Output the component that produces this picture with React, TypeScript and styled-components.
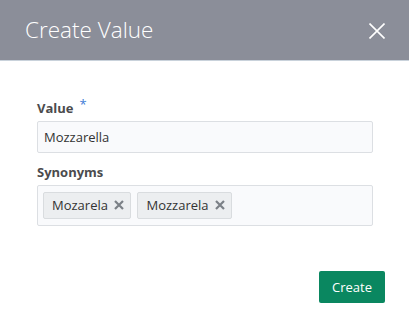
import React from "react";
import styled, { createGlobalStyle } from "styled-components";

const Global = createGlobalStyle`
  html, body { margin: 0; padding: 0; background: #ffffff; }
  body { font-family: "Open Sans", "Noto Sans", sans-serif; }
  * { box-sizing: border-box; }
`;

const Dialog = styled.div`
  width: 409px;
  height: 328px;
  background: #ffffff;
  display: flex;
  flex-direction: column;
`;

const Header = styled.div`
  height: 61px;
  background: #8b8e99;
  border-bottom: 1px solid #c9d2db;
  display: flex;
  align-items: center;
  justify-content: space-between;
  padding: 0 24px 0 25px;
`;

const Title = styled.h1`
  margin: 0;
  font-size: 22.5px;
  font-weight: 300;
  color: #ffffff;
  line-height: 30px;
`;

const CloseButton = styled.button`
  width: 16px;
  height: 16px;
  padding: 0;
  border: 0;
  background: transparent;
  display: flex;
  cursor: pointer;
  margin-top: 1px;
`;

const Body = styled.div`
  padding: 38px 36px 0 37px;
  display: flex;
  flex-direction: column;
`;

const Label = styled.label`
  display: block;
  font-size: 13px;
  font-weight: 700;
  color: #4b4b4d;
  line-height: 18px;
  margin-bottom: 3.5px;
`;

const Required = styled.span`
  color: #3d7dd6;
  font-weight: 400;
  margin-left: 6px;
  position: relative;
  top: -4px;
`;

const Field = styled.div<{ $gap?: number }>`
  margin-top: ${(p) => p.$gap ?? 0}px;
`;

const Input = styled.input`
  width: 100%;
  height: 32px;
  border: 1px solid #dcdfe3;
  border-radius: 2px;
  background: #f9fafc;
  padding: 0 7px 0 6px;
  font-family: "Open Sans", "Noto Sans", sans-serif;
  font-size: 13px;
  color: #333333;
  outline: none;
`;

const TagBox = styled.div`
  width: 100%;
  border: 1px solid #dcdfe3;
  border-radius: 2px;
  background: #f9fafc;
  padding: 6px 5px;
  display: flex;
  gap: 6px;
`;

const Chip = styled.div`
  height: 27px;
  display: flex;
  align-items: center;
  gap: 6.5px;
  padding: 0 6px 0 8px;
  background: #eceef0;
  border: 1px solid #d9dcdf;
  border-radius: 2px;
  font-size: 13px;
  color: #333333;
`;

const ChipRemove = styled.span`
  display: flex;
  width: 10px;
  height: 10px;
`;

const Footer = styled.div`
  margin-top: auto;
  padding: 0 24px 25px 0;
  display: flex;
  justify-content: flex-end;
`;

const PrimaryButton = styled.button`
  height: 32px;
  padding: 0 13px;
  background: #0a8760;
  color: #ffffff;
  border: 0;
  border-radius: 2px;
  font-family: "Open Sans", "Noto Sans", sans-serif;
  font-size: 13px;
  cursor: pointer;
`;

const CloseIcon = () => (
  <svg width="16" height="16" viewBox="0 0 16 16">
    <path d="M0.5 0.5 L15.5 15.5 M15.5 0.5 L0.5 15.5" stroke="#ffffff" strokeWidth="1.6" fill="none" />
  </svg>
);

const SmallX = () => (
  <svg width="10" height="10" viewBox="0 0 10 10">
    <path d="M1 1 L9 9 M9 1 L1 9" stroke="#7b8086" strokeWidth="2.2" fill="none" />
  </svg>
);

const synonyms = ["Mozarela", "Mozzarela"];

export default function App() {
  return (
    <>
      <Global />
      <Dialog>
        <Header>
          <Title>Create Value</Title>
          <CloseButton aria-label="Close">
            <CloseIcon />
          </CloseButton>
        </Header>
        <Body>
          <Field>
            <Label>
              Value<Required>*</Required>
            </Label>
            <Input defaultValue="Mozzarella" />
          </Field>
          <Field $gap={10.5}>
            <Label>Synonyms</Label>
            <TagBox>
              {synonyms.map((s) => (
                <Chip key={s}>
                  {s}
                  <ChipRemove>
                    <SmallX />
                  </ChipRemove>
                </Chip>
              ))}
            </TagBox>
          </Field>
        </Body>
        <Footer>
          <PrimaryButton>Create</PrimaryButton>
        </Footer>
      </Dialog>
    </>
  );
}
